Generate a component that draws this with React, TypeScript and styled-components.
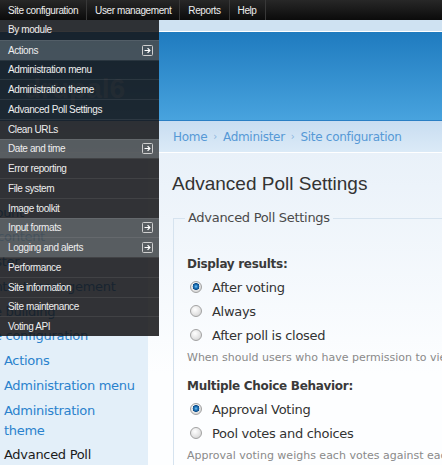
import React from "react";
import styled, { createGlobalStyle } from "styled-components";

const Global = createGlobalStyle`
  html, body { margin: 0; padding: 0; overflow: hidden; background: #fff; }
  body { width: 442px; height: 465px; }
`;

const Page = styled.div`
  width: 640px;
  position: relative;
`;

/* ---------- admin toolbar ---------- */
const AdminBar = styled.nav`
  height: 20px;
  display: flex;
  background: linear-gradient(#272727, #0b0b0b);
  font: 10px "Liberation Sans", Arial, sans-serif;
  letter-spacing: -0.4px;
  color: #eee;
`;

const BarItem = styled.span`
  display: flex;
  align-items: center;
  padding: 0 8px;
  border-right: 1px solid #383838;
`;

/* ---------- dropdown ---------- */
const Dropdown = styled.ul`
  position: absolute;
  top: 20px;
  left: 0;
  width: 159px;
  margin: 0;
  padding: 0;
  list-style: none;
  z-index: 10;
  font: 10px "Liberation Sans", Arial, sans-serif;
  letter-spacing: -0.4px;
  color: #eee;
`;

const DropRow = styled.li<{ $parent?: boolean }>`
  box-sizing: border-box;
  height: 19.75px;
  display: flex;
  align-items: center;
  justify-content: space-between;
  padding: 0 6px 0 8px;
  background: ${(p) => (p.$parent ? "rgba(72, 76, 80, 0.9)" : "rgba(22, 22, 24, 0.87)")};
  & + & {
    border-top: 1px solid rgba(255, 255, 255, 0.08);
  }
`;

const Expand = () => (
  <svg width="11" height="11" viewBox="0 0 11 11">
    <rect x="0.5" y="0.5" width="10" height="10" rx="1" fill="none" stroke="#cfcfcf" />
    <path d="M2.5 5.5h5.3M5.6 3.2l2.3 2.3-2.3 2.3" fill="none" stroke="#fff" strokeWidth="1.2" />
  </svg>
);

/* ---------- header ---------- */
const TopStrip = styled.div`
  height: 11px;
  background: #cfe2f2;
  border-bottom: 1px solid #fff;
`;

const Banner = styled.div`
  height: 89px;
  background: linear-gradient(#1f7bbf, #48a3de);
  border-bottom: 1px solid #2a7fc4;
  padding: 42px 0 0 24px;
  box-sizing: border-box;
`;

const Logo = styled.span`
  font: bold 28px/30px "Liberation Sans", Arial, sans-serif;
  color: rgba(255, 255, 255, 0.32);
`;

const Crumbs = styled.div`
  height: 31px;
  display: flex;
  align-items: center;
  padding-left: 173px;
  background: linear-gradient(#c8ddf1, #dbeaf7);
  border-bottom: 1px solid #fff;
  font: 12px "DejaVu Sans", Verdana, sans-serif;
  letter-spacing: -0.3px;
  color: #5699d6;
  gap: 6px;
`;

const Sep = styled.span`
  color: #8ab4dc;
  font-size: 10px;
`;

/* ---------- body ---------- */
const Body = styled.div`
  display: grid;
  grid-template-columns: 148px 1fr;
  min-height: 320px;
`;

const Sidebar = styled.aside`
  background: #e3eff9;
  overflow: hidden;
  padding: 49.5px 12px 0 0;
  font: 13px "DejaVu Sans", Verdana, sans-serif;
  letter-spacing: -0.3px;
`;

const NavList = styled.ul<{ $root?: boolean }>`
  list-style: none;
  margin: 0 0 0 ${(p) => (p.$root ? "-48px" : "0")};
  padding: 0 0 0 ${(p) => (p.$root ? "0" : "26px")};
`;

const NavItem = styled.li`
  line-height: 20px;
  > span {
    display: block;
    margin-bottom: 4.75px;
  }
`;

const NavLink = styled.span<{ $active?: boolean }>`
  color: ${(p) => (p.$active ? "#1b1b1b" : "#2a82cd")};
  white-space: normal;
`;

const Main = styled.main`
  padding: 19px 0 0 24px;
  background: linear-gradient(#e9f1f9, #fdfeff 220px);
`;

const Title = styled.h1`
  margin: 0;
  font: 19px/24px "Liberation Sans", Arial, sans-serif;
  color: #333;
`;

const Fieldset = styled.fieldset`
  margin: 14px 0 0 1px;
  padding: 30px 14px 20px 13px;
  border: 1px solid #d6e3ef;
  min-width: 0;
`;

const Legend = styled.legend`
  padding: 0 3px;
  margin-left: -2px;
  font: 13px/16px "DejaVu Sans", Verdana, sans-serif;
  letter-spacing: -0.3px;
  color: #4a4a4a;
`;

const FormItem = styled.div`
  margin-bottom: 13px;
`;

const FieldLabel = styled.div`
  font: bold 12px/16px "DejaVu Sans", Verdana, sans-serif;
  letter-spacing: -0.3px;
  color: #3a3a3a;
  margin-bottom: 3px;
`;

const Option = styled.label`
  height: 24px;
  display: flex;
  align-items: center;
  gap: 10px;
  padding-left: 3px;
  font: 13px "DejaVu Sans", Verdana, sans-serif;
  letter-spacing: -0.3px;
  color: #333;
`;

const Radio = styled.input.attrs({ type: "radio" })`
  appearance: none;
  width: 12px;
  height: 12px;
  margin: 0;
  border-radius: 50%;
  border: 1px solid #a2a2a2;
  box-sizing: border-box;
  background: radial-gradient(circle at 40% 35%, #ffffff 0, #e4e4e4 55%, #c9c9c9 100%);
  &:checked {
    background: radial-gradient(circle at 50% 45%, #7cc8f7 0, #2278bd 1.6px, #0c4c88 3.2px, rgba(12, 76, 136, 0) 3.6px),
      radial-gradient(circle at 40% 35%, #ffffff 0, #e4e4e4 55%, #c9c9c9 100%);
  }
`;

const Description = styled.div`
  margin-top: 4px;
  font: 11px/14px "DejaVu Sans", Verdana, sans-serif;
  color: #8a8a8a;
  white-space: nowrap;
`;

const menuItems: [string, boolean][] = [
  ["By module", false],
  ["Actions", true],
  ["Administration menu", false],
  ["Administration theme", false],
  ["Advanced Poll Settings", false],
  ["Clean URLs", false],
  ["Date and time", true],
  ["Error reporting", false],
  ["File system", false],
  ["Image toolkit", false],
  ["Input formats", true],
  ["Logging and alerts", true],
  ["Performance", false],
  ["Site information", false],
  ["Site maintenance", false],
  ["Voting API", false],
];

export default function App() {
  return (
    <Page>
      <Global />
      <AdminBar>
        <BarItem>Site configuration</BarItem>
        <BarItem>User management</BarItem>
        <BarItem>Reports</BarItem>
        <BarItem>Help</BarItem>
      </AdminBar>

      <Dropdown>
        {menuItems.map(([label, parent]) => (
          <DropRow key={label} $parent={parent}>
            <span>{label}</span>
            {parent && <Expand />}
          </DropRow>
        ))}
      </Dropdown>

      <TopStrip />
      <Banner>
        <Logo>drupal6</Logo>
      </Banner>
      <Crumbs>
        <span>Home</span>
        <Sep>›</Sep>
        <span>Administer</span>
        <Sep>›</Sep>
        <span>Site configuration</span>
      </Crumbs>

      <Body>
        <Sidebar>
          <NavList $root>
            <NavItem><NavLink>My account</NavLink></NavItem>
            <NavItem><NavLink>Create content</NavLink></NavItem>
            <NavItem>
              <NavLink>Administer</NavLink>
              <NavList>
                <NavItem><NavLink>Content management</NavLink></NavItem>
                <NavItem><NavLink>Site building</NavLink></NavItem>
                <NavItem>
                  <NavLink>Site configuration</NavLink>
                  <NavList>
                    <NavItem><NavLink>Actions</NavLink></NavItem>
                    <NavItem><NavLink>Administration menu</NavLink></NavItem>
                    <NavItem><NavLink>Administration theme</NavLink></NavItem>
                    <NavItem><NavLink $active>Advanced Poll Settings</NavLink></NavItem>
                  </NavList>
                </NavItem>
              </NavList>
            </NavItem>
          </NavList>
        </Sidebar>

        <Main>
          <Title>Advanced Poll Settings</Title>
          <Fieldset>
            <Legend>Advanced Poll Settings</Legend>
            <FormItem>
              <FieldLabel>Display results:</FieldLabel>
              <Option><Radio name="view" defaultChecked />After voting</Option>
              <Option><Radio name="view" />Always</Option>
              <Option><Radio name="view" />After poll is closed</Option>
              <Description>When should users who have permission to view results be able to see them?</Description>
            </FormItem>
            <FormItem>
              <FieldLabel>Multiple Choice Behavior:</FieldLabel>
              <Option><Radio name="multi" defaultChecked />Approval Voting</Option>
              <Option><Radio name="multi" />Pool votes and choices</Option>
              <Description>Approval voting weighs each votes against each other.</Description>
            </FormItem>
          </Fieldset>
        </Main>
      </Body>
    </Page>
  );
}
